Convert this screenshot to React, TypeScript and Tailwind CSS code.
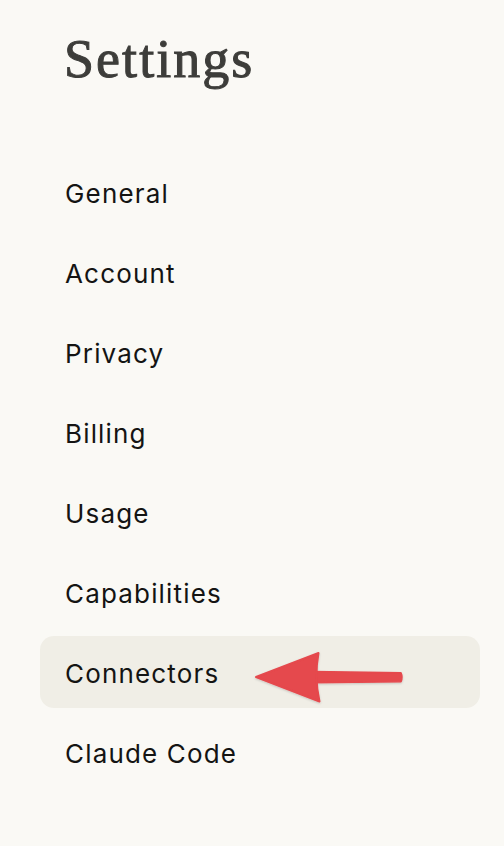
import React from "react";

const items = ["General", "Account", "Privacy", "Billing", "Usage", "Capabilities", "Connectors", "Claude Code"];

export default function App() {
  return (
    <div className="relative min-h-[846px] w-[504px] bg-[#faf9f5] overflow-hidden">
      <div className="pl-[64px] pt-[27px] h-[156px]">
        <h1
          className="text-[54px] leading-[64px] text-[#3d3d3a] tracking-[0.038em] [-webkit-text-stroke:1px_#3d3d3a]"
          style={{ fontFamily: '"Liberation Serif", serif' }}
        >
          Settings
        </h1>
      </div>
      <nav className="flex flex-col gap-2 pl-10 pr-6">
        {items.map((it) => (
          <div
            key={it}
            className={`h-[72px] flex items-center pl-[25px] pt-[3px] rounded-[14px] text-[26px] text-[#141413] tracking-[0.045em] ${
              it === "Connectors" ? "bg-[#f0eee6]" : ""
            }`}
            style={{ fontFamily: 'Inter, "Noto Sans", sans-serif' }}
          >
            {it}
          </div>
        ))}
      </nav>
      <svg
        className="absolute left-0 top-0"
        width="504"
        height="846"
        viewBox="0 0 504 846"
      >
        <defs>
          <filter id="sh" x="-20%" y="-50%" width="140%" height="200%">
            <feDropShadow dx="0" dy="1" stdDeviation="1.2" floodColor="#000" floodOpacity="0.18" />
          </filter>
        </defs>
        <g filter="url(#sh)" fill="#e5484d" stroke="#e5484d" strokeLinejoin="round">
          <path d="M312 671.5 L401 672.7 Q403 677 401 681.8 L312 682.8 Z" strokeWidth="1.5" />
          <path d="M256 677 L318.5 653 Q314 677 319.5 701.5 Z" strokeWidth="2" />
        </g>
      </svg>
    </div>
  );
}
